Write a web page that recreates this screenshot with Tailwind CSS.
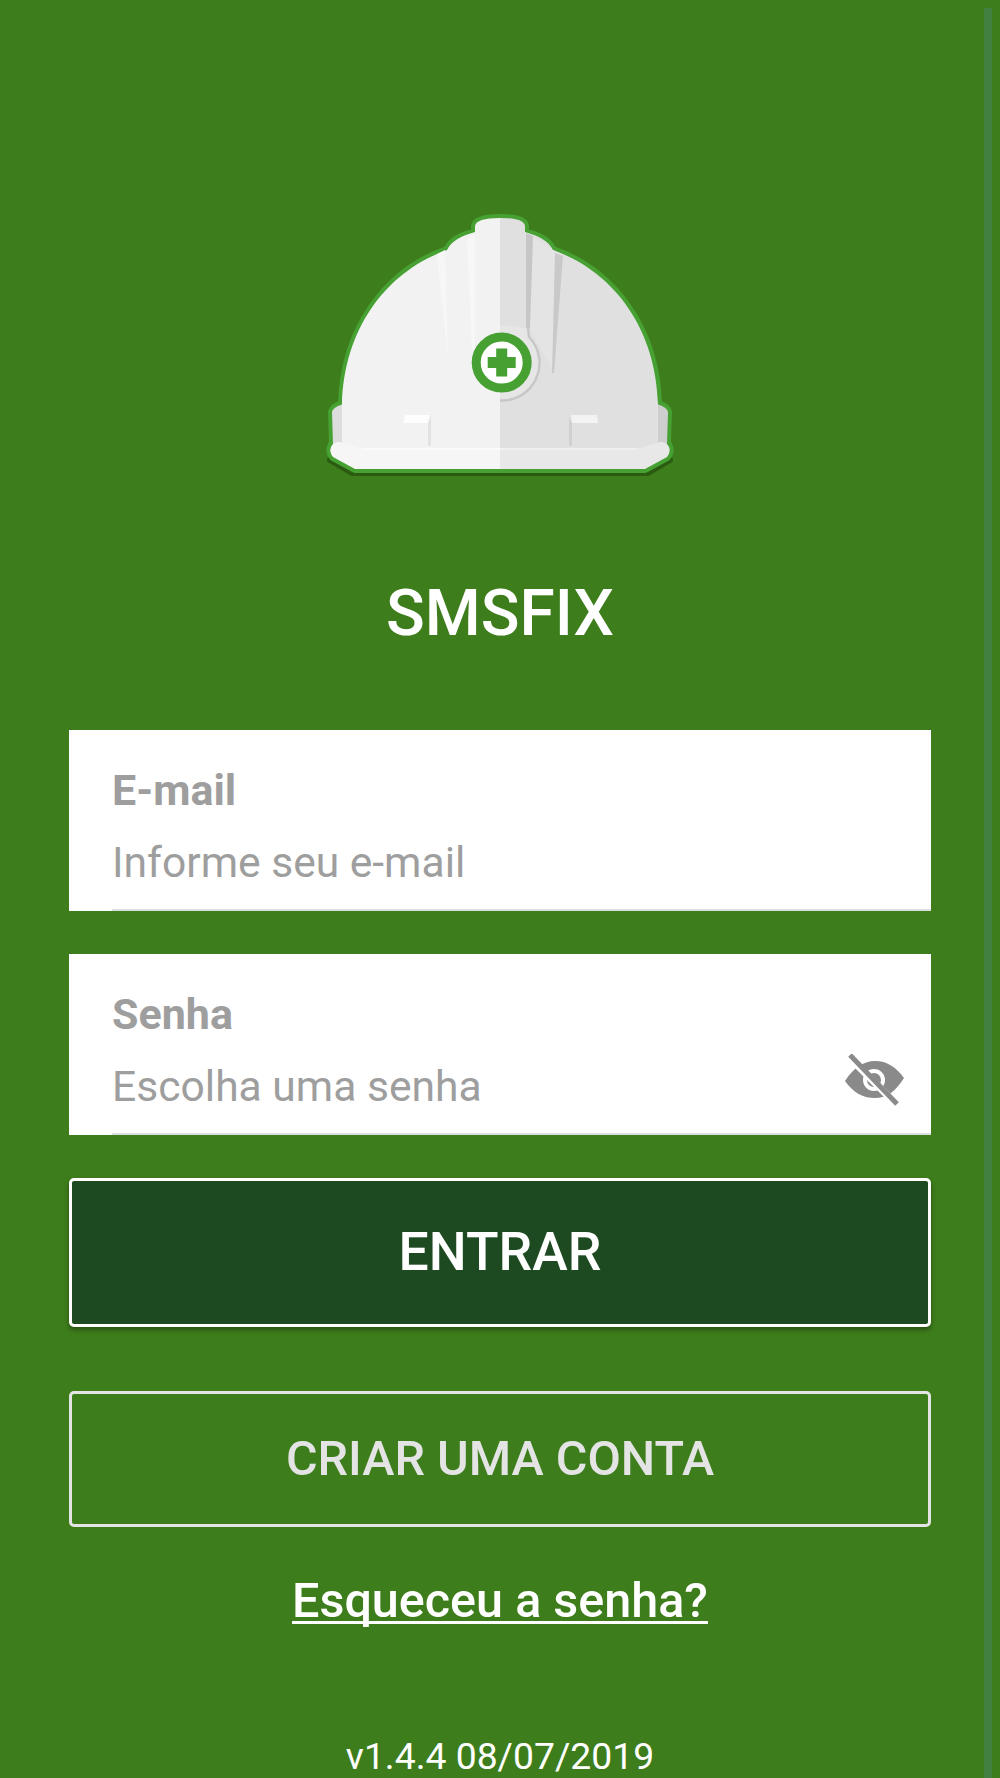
<!DOCTYPE html>
<html lang="pt-BR">
<head>
    <meta charset="UTF-8">
    <meta name="viewport" content="width=device-width, initial-scale=1.0">
    <title>SMSFIX</title>
    <script src="https://cdn.jsdelivr.net/npm/@tailwindcss/browser@4"></script>
</head>
<body class="bg-[#3e7d1b] font-['Roboto',sans-serif] overflow-hidden">
    <div class="relative w-[1000px] h-[1778px] flex flex-col items-center overflow-hidden">
        <!-- scrollbar -->
        <div class="absolute right-[8px] top-[8px] bottom-0 w-[8px] bg-[#418041]"></div>

        <!-- capacete -->
        <svg class="block mt-[190px] w-[400px] h-[300px] shrink-0 blur-[0.7px]" viewBox="0 0 400 300">
            <!-- sombra -->
            <path d="M52 283 L30 270 L370 270 L348 283 Z" fill="#163a08" stroke="#163a08" stroke-width="6" stroke-linejoin="round" opacity="0.5"/>
            <!-- contorno -->
            <path d="M55 279 L33 267 Q29 262 31 257 Q32 254 33 252 L32 222 Q33 217 42 214 C44 140 85 82 147 60 C152 50 162 46 175 42 L175 36 Q176 28 200 28 Q224 28 225 36 L225 42 C238 46 248 50 253 60 C315 82 356 140 358 214 Q367 217 368 222 L367 252 Q368 254 369 257 Q371 262 367 267 L345 279 Z" fill="#46a032" stroke="#46a032" stroke-width="8" stroke-linejoin="round"/>
            <!-- aba lateral -->
            <path d="M32 222 Q33 217 43 214 L43 255 L33 255 Z" fill="#dcdcdc"/>
            <path d="M368 222 Q367 217 357 214 L357 255 L367 255 Z" fill="#cecece"/>
            <!-- casco -->
            <path d="M42 260 L42 214 C44 140 85 82 147 60 C152 50 162 46 175 42 L175 36 Q176 28 200 28 L200 260 Z" fill="#f2f2f2"/>
            <path d="M358 260 L358 214 C356 140 315 82 253 60 C248 50 238 46 225 42 L225 36 Q224 28 200 28 L200 260 Z" fill="#e0e0e0"/>
            <path d="M225 42 L253 60 L262 65 L254 183 L230 140 Z" fill="#e4e4e4"/>
            <!-- nervuras -->
            <path d="M137 64 L145 60 L148 168 Z" fill="#f7f7f7"/>
            <path d="M167 50 L175 44 L175 160 L172 160 Z" fill="#f7f7f7"/>
            <path d="M226 43 L233 46 L230 138 L226 138 Z" fill="#c6c6c6"/>
            <path d="M255 63 L263 66 L254 183 L252 183 Z" fill="#c9c9c9"/>
            <!-- arco em volta do emblema -->
            <path d="M226 138 L229 147 A37.500 37.500 0 0 1 200 210.500 L200 135 Z" fill="#e6e6e6"/>
            <path d="M228 138 L229 147 A37.500 37.500 0 0 1 200 210.500" fill="none" stroke="#c8c8c8" stroke-width="2.500"/>
            <!-- presilhas -->
            <path d="M105 225 L130 225 L128 233 L103 233 Z" fill="#fdfdfd"/>
            <path d="M128 233 L131 225 L131 256 L128 256 Z" fill="#e2e2e2"/>
            <path d="M271 225 L297 225 L298 233 L272 233 Z" fill="#f3f3f3"/>
            <path d="M269 227 L272 233 L272 256 L269 256 Z" fill="#d0d0d0"/>
            <!-- aba -->
            <path d="M40 252 L60 258 L200 258 L200 279 L55 279 L33 267 Q29 262 31 257 Q33 252 40 252 Z" fill="#f6f6f6"/>
            <path d="M360 252 L340 258 L200 258 L200 279 L345 279 L367 267 Q371 262 369 257 Q367 252 360 252 Z" fill="#e8e8e8"/>
            <path d="M60 258 L200 258 L200 260 L66 260 Z" fill="#fafafa"/>
            <path d="M200 258 L340 258 L334 260 L200 260 Z" fill="#f0f0f0"/>
            <!-- cruz -->
            <circle cx="201.700" cy="172.600" r="25.500" fill="#ffffff" stroke="#46a032" stroke-width="9"/>
            <path d="M196.200 158.600 H207.200 V167.100 H215.700 V178.100 H207.200 V186.600 H196.200 V178.100 H187.700 V167.100 H196.200 Z" fill="#46a032"/>
        </svg>

        <h1 class="mt-[92px] text-white font-medium text-[64px] leading-[64px]">SMSFIX</h1>

        <main class="mt-[84px] self-start ml-[69px] w-[862px] flex flex-col">
            <div class="relative bg-white h-[181px] pl-[43px]">
                <div class="pt-[38px] text-[#9e9e9e] font-bold text-[43px] leading-[44px]">E-mail</div>
                <div class="pt-[28px] text-[#9e9e9e] text-[42.600px] leading-[44px]">Informe seu e-mail</div>
                <div class="absolute left-[43px] right-0 bottom-0 h-[2px] bg-[#dedede]"></div>
            </div>
            <div class="relative bg-white h-[181px] pl-[43px] mt-[43px]">
                <div class="pt-[38px] text-[#9e9e9e] font-bold text-[43px] leading-[44px]">Senha</div>
                <div class="pt-[28px] text-[#9e9e9e] text-[42.600px] leading-[44px]">Escolha uma senha</div>
                <div class="absolute left-[43px] right-0 bottom-0 h-[2px] bg-[#dedede]"></div>
                <svg class="absolute left-[773px] top-[100px] w-[64px] h-[56px]" viewBox="0 0 64 56">
                    <path fill-rule="evenodd" d="M3 27 C12 13 22 7 33 7 C45 7 54 13 62 24 C54 37 45 44 33 44 C20 44 11 38 3 27 Z M21 26 A11 11 0 1 0 43 26 A11 11 0 1 0 21 26 Z" fill="#8a8a8a"/>
                    <circle cx="32" cy="26" r="7" fill="#8a8a8a"/>
                    <path d="M6 2 L56 52" stroke="#ffffff" stroke-width="7"/>
                    <path d="M8 1 L55 50" stroke="#8a8a8a" stroke-width="5"/>
                </svg>
            </div>

            <button class="mt-[43px] h-[149px] rounded-[5px] border-[3px] border-white bg-[#1e4a22] text-white font-medium text-[53.500px] shadow-[0_3px_5px_rgba(0,0,0,0.35)]">ENTRAR</button>
            <button class="mt-[64px] h-[136px] rounded-[5px] border-[3px] border-[#e4e4e4] text-[#e4e4e4] font-medium text-[48.500px]">CRIAR UMA CONTA</button>
        </main>

        <a class="mt-[46px] text-white font-medium text-[48.500px] leading-[56px] underline underline-offset-[4px] decoration-[3px] [text-decoration-skip-ink:none]">Esqueceu a senha?</a>
        <div class="mt-[107px] text-white text-[37.300px] leading-[40px]">v1.4.4 08/07/2019</div>
    </div>
</body>
</html>
